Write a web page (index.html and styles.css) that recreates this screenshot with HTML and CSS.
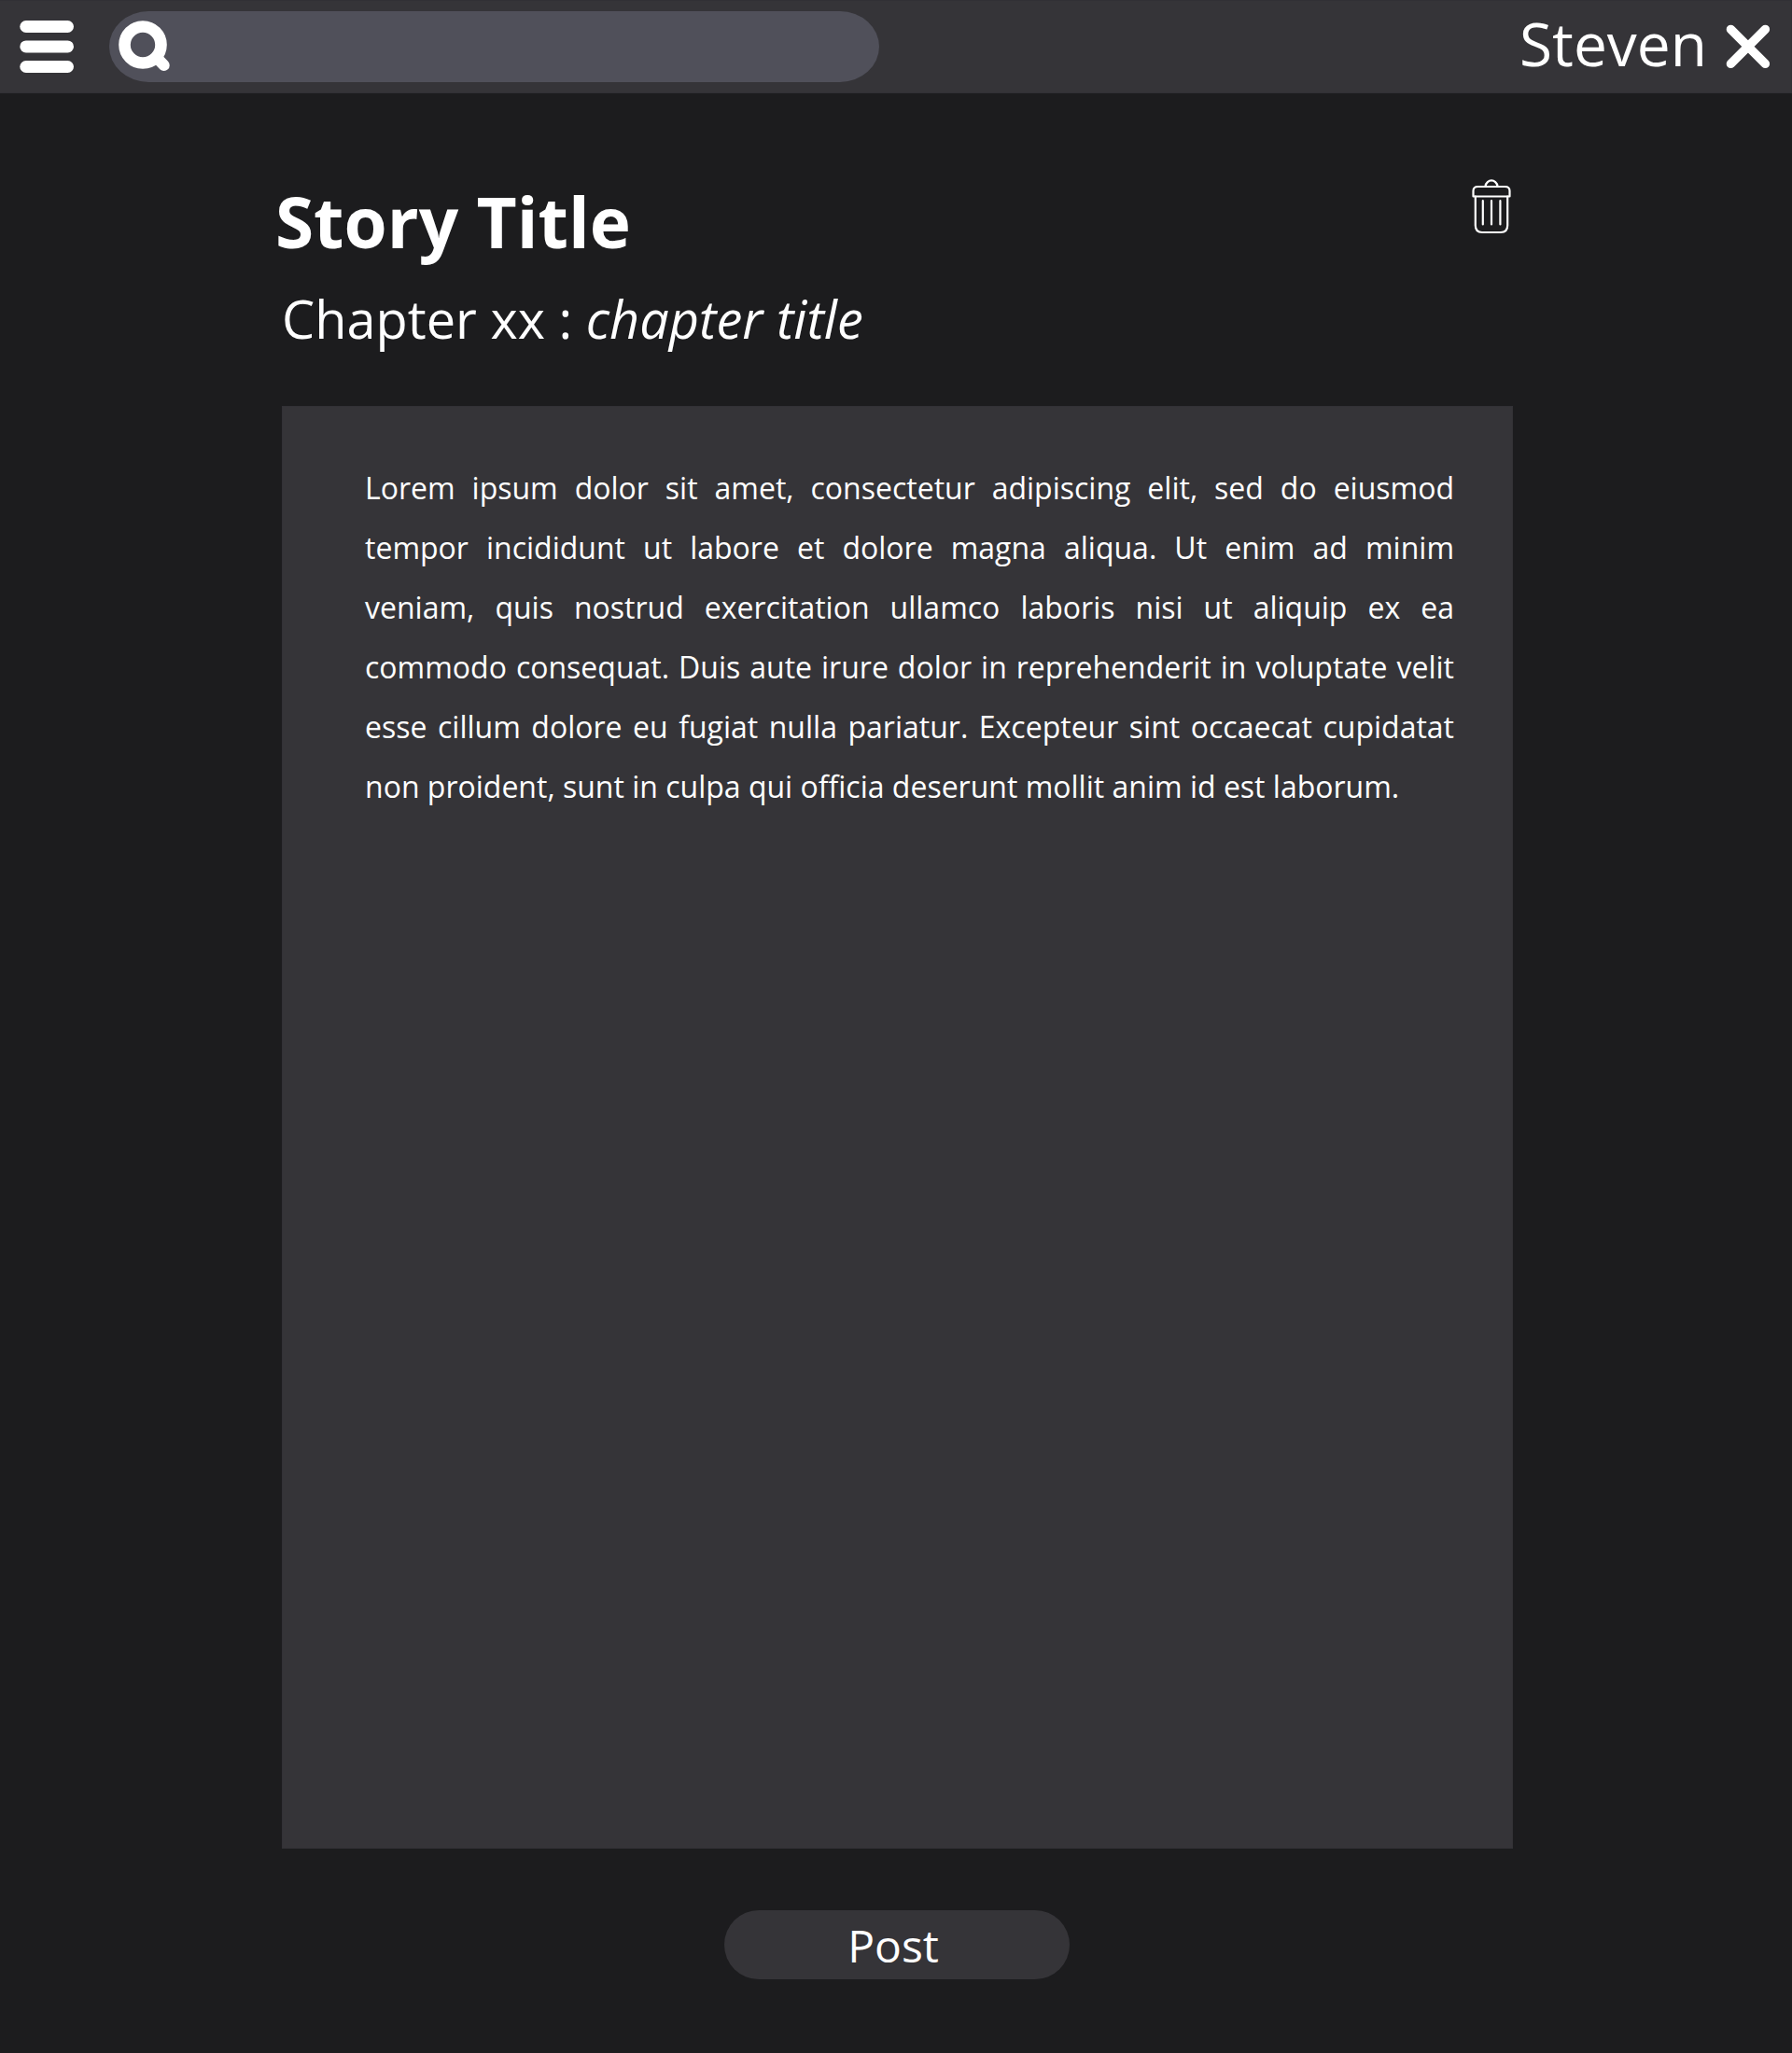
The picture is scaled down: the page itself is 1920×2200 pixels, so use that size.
FILE: index.html
```html
<!DOCTYPE html>
<html lang="en">
<head>
<meta charset="utf-8">
<title>Story Title</title>
<link rel="stylesheet" href="styles.css">
</head>
<body>
<header class="topbar">
  <svg class="menu-icon" width="58" height="56" viewBox="0 0 58 56" fill="#fff">
    <rect x="0.300" y="0" width="57.700" height="13" rx="6.500"/>
    <rect x="0.300" y="21.400" width="57.700" height="13" rx="6.500"/>
    <rect x="0.300" y="43" width="57.700" height="13" rx="6.500"/>
  </svg>
  <div class="search">
    <svg width="56" height="56" viewBox="0 0 56 56" fill="none" stroke="#fff">
      <circle cx="26" cy="26" r="19.5" stroke-width="12.6"/>
      <path d="M42 41l6.7 7" stroke-width="12" stroke-linecap="round"/>
    </svg>
  </div>
  <span class="user">Steven</span>
  <svg class="close-icon" width="48" height="48" viewBox="0 0 48 48" fill="none" stroke="#fff" stroke-width="9.4" stroke-linecap="round">
    <path d="M5.4 5.4l37 37M42.4 5.4l-37 37"/>
  </svg>
</header>
<main class="page">
  <div class="heading">
    <div>
      <h1 class="title">Story Title</h1>
      <p class="chapter">Chapter xx : <em>chapter title</em></p>
    </div>
    <svg class="trash-icon" width="42" height="60" viewBox="0 0 42 60" fill="none" stroke="#fff" stroke-width="2.2" stroke-linecap="round" stroke-linejoin="round">
      <path d="M14.500 8.500C15 4.800 18 2.400 21 2.400S27 4.800 27.500 8.500"/>
      <path d="M1.500 19.500V13.500Q1.500 9 6.500 9H35.500Q40.500 9 40.500 13.500V19.500Z"/>
      <path d="M3.800 19.500V50.500Q3.800 58 11 58H31Q38.200 58 38.200 50.500V19.500"/>
      <path d="M11.800 24.200V49.500M21 24.200V49.500M30.400 24.200V49.500"/>
    </svg>
  </div>
  <article class="story">
    <p class="text">Lorem ipsum dolor sit amet, consectetur adipiscing elit, sed do eiusmod tempor incididunt ut labore et dolore magna aliqua. Ut enim ad minim veniam, quis nostrud exercitation ullamco laboris nisi ut aliquip ex ea commodo consequat. Duis aute irure dolor in reprehenderit in voluptate velit esse cillum dolore eu fugiat nulla pariatur. Excepteur sint occaecat cupidatat non proident, sunt in culpa qui officia deserunt mollit anim id est laborum.</p>
  </article>
  <button class="post">Post</button>
</main>
</body>
</html>
```
FILE: styles.css
```css
* {
  box-sizing: border-box;
}

body {
  margin: 0;
  min-height: 2200px;
  background: #1c1c1e;
  color: #fff;
  font-family: "Open Sans", sans-serif;
}

svg {
  display: block;
  flex: none;
}

.topbar {
  display: flex;
  align-items: center;
  height: 100px;
  padding: 0 22px 0 21px;
  background: #353438;
  border: 1px solid #313035;
  border-left: 0;
}

.search {
  display: flex;
  align-items: center;
  width: 825px;
  height: 76px;
  margin-left: 38px;
  padding: 0 10px;
  border-radius: 42px / 38px;
  background: #50505a;
}

.user {
  margin-left: auto;
  font-size: 64px;
  line-height: 88px;
  margin-top: -7px;
}

.close-icon {
  margin-left: 20px;
}

.page {
  display: flex;
  flex-direction: column;
  padding: 91px 299px 0 302px;
}

.heading {
  display: flex;
  justify-content: space-between;
  height: 244px;
}

.title {
  margin: -2px 0 0 -7px;
  font-size: 74.67px;
  line-height: 96px;
}

.chapter {
  margin: 16px 0 0;
  font-size: 55.9px;
  line-height: 80px;
}

.trash-icon {
  margin-right: 2.5px;
}

.story {
  height: 1546px;
  padding: 55px 62px 0 88px;
  background: #353438;
  border: 1px solid #323136;
}

.text {
  margin: 0;
  font-size: 32px;
  line-height: 64px;
  text-align: justify;
}

.post {
  align-self: center;
  width: 370px;
  height: 74px;
  margin-top: 66px;
  margin-right: 1px;
  padding: 1px 8px 0 0;
  border: 0;
  border-radius: 37px;
  background: #353438;
  color: #fff;
  font: 48px/73px "Open Sans", sans-serif;
}
```
